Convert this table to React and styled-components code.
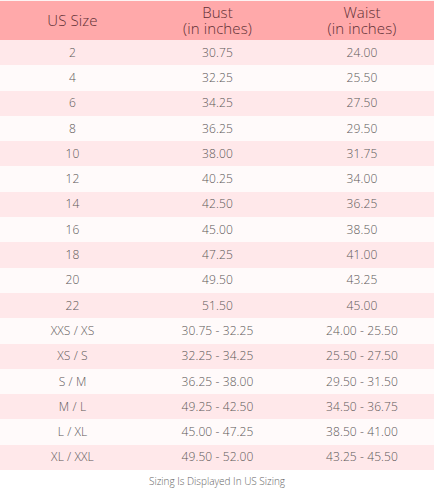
import React from 'react';
import styled, { createGlobalStyle } from 'styled-components';

const GlobalStyle = createGlobalStyle`
  html, body {
    margin: 0;
    padding: 0;
    background: #ffffff;
  }
  body {
    font-family: 'Open Sans', 'Liberation Sans', sans-serif;
  }
`;

const Chart = styled.div`
  width: 434px;
  padding-top: 1px;
  background: #fdf3f3;
`;

const Row = styled.div`
  display: grid;
  grid-template-columns: 145px 145px 144px;
  height: ${({ head }) => (head ? '39px' : '25.3px')};
  align-items: center;
  background: ${({ head, odd }) =>
    head ? '#ffa9aa' : odd ? '#ffe8ea' : '#fffafa'};
`;

const Cell = styled.div`
  text-align: center;
  font-size: ${({ head }) => (head ? '15px' : '12px')};
  line-height: ${({ head }) => (head ? '15.5px' : '14px')};
  font-weight: 300;
  color: ${({ head }) => (head ? '#5e3035' : '#5c5858')};
  letter-spacing: 0.1px;
`;

const Line = styled.span`
  display: block;
`;

const Note = styled.div`
  background: #ffffff;
  text-align: center;
  font-size: 10px;
  font-weight: 300;
  color: #666;
  padding-top: 5px;
  height: 13px;
  line-height: 13px;
`;

const rows = [
  ['2', '30.75', '24.00'],
  ['4', '32.25', '25.50'],
  ['6', '34.25', '27.50'],
  ['8', '36.25', '29.50'],
  ['10', '38.00', '31.75'],
  ['12', '40.25', '34.00'],
  ['14', '42.50', '36.25'],
  ['16', '45.00', '38.50'],
  ['18', '47.25', '41.00'],
  ['20', '49.50', '43.25'],
  ['22', '51.50', '45.00'],
  ['XXS / XS', '30.75 - 32.25', '24.00 - 25.50'],
  ['XS / S', '32.25 - 34.25', '25.50 - 27.50'],
  ['S / M', '36.25 - 38.00', '29.50 - 31.50'],
  ['M / L', '49.25 - 42.50', '34.50 - 36.75'],
  ['L / XL', '45.00 - 47.25', '38.50 - 41.00'],
  ['XL / XXL', '49.50 - 52.00', '43.25 - 45.50'],
];

export default function App() {
  return (
    <>
      <GlobalStyle />
      <Chart>
        <Row head>
          <Cell head>US Size</Cell>
          <Cell head>
            <Line>Bust</Line>
            <Line>(in inches)</Line>
          </Cell>
          <Cell head>
            <Line>Waist</Line>
            <Line>(in inches)</Line>
          </Cell>
        </Row>
        {rows.map((r, i) => (
          <Row key={r[0]} odd={i % 2 === 0}>
            {r.map((v, j) => (
              <Cell key={j}>{v}</Cell>
            ))}
          </Row>
        ))}
        <Note>Sizing Is Displayed In US Sizing</Note>
      </Chart>
    </>
  );
}
